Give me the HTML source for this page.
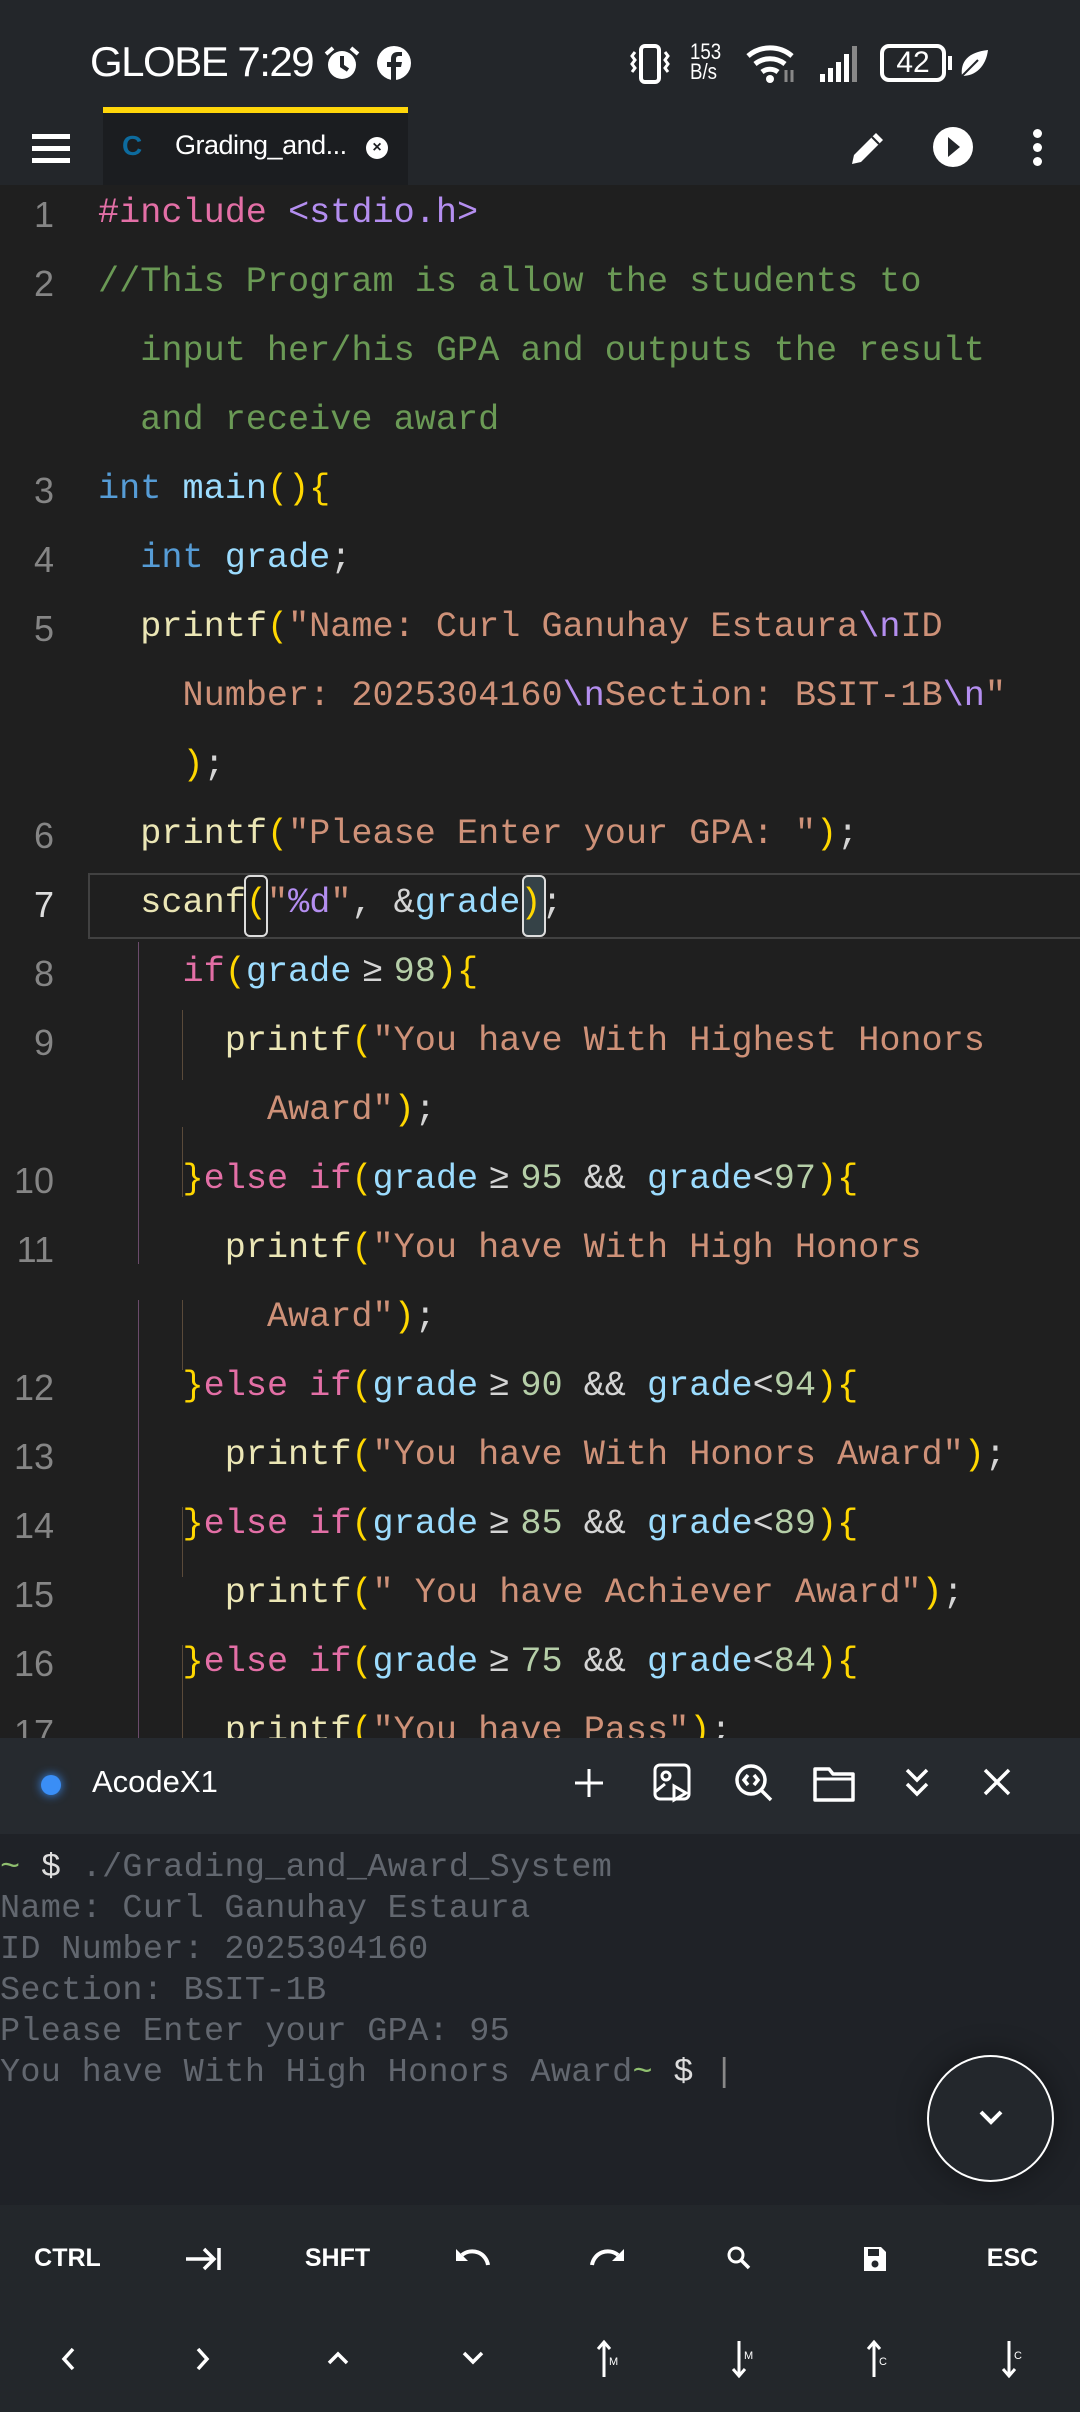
<!DOCTYPE html>
<html><head><meta charset="utf-8"><style>
*{margin:0;padding:0;box-sizing:border-box}
body{width:1080px;height:2412px;background:#1f1f1f;position:relative;overflow:hidden;font-family:"Liberation Sans",sans-serif}
.abs{position:absolute}
#status{left:0;top:0;width:1080px;height:110px;background:#23262a}
#tool{left:0;top:110px;width:1080px;height:75px;background:#23262a}
#editor{left:0;top:185px;width:1080px;height:1553px;background:#1f1f1f;overflow:hidden}
.row{position:absolute;left:98px;height:69px;line-height:71px;font-family:"Liberation Mono","DejaVu Sans Mono",monospace;font-size:35.2px;white-space:pre;color:#d4d4d4}
.ln{position:absolute;left:0;width:54px;text-align:right;height:69px;line-height:74px;font-family:"Liberation Sans",sans-serif;font-size:36px;color:#858585}
.k{color:#e36fa6}.f{color:#ebe6b5}.s{color:#ce9178}.v{color:#9cdcfe}.n{color:#b5cea8}.b{color:#ffd700}.t{color:#569cd6}.c{color:#6a9955}.p{color:#b48ef0}.e{color:#b48ef0}.w{color:#d4d4d4}
.ge{display:inline-block;width:2ch;text-align:center;color:#d4d4d4}
.g1{position:absolute;width:1px;background:#6b4b6b}
.g2{position:absolute;width:1px;background:#5a4a3a}
#term{left:0;top:1738px;width:1080px;height:467px;background:#1f2227}
#thead{left:0;top:1738px;width:1080px;height:96px;background:#262a2f}
.tl{position:absolute;left:0;font-family:"Liberation Mono",monospace;font-size:33.5px;letter-spacing:0.3px;color:#62676f;white-space:pre;height:41px;line-height:41px}
#kb{left:0;top:2205px;width:1080px;height:207px;background:#23272b}
.key{position:absolute;width:135px;text-align:center;color:#fff;font-weight:bold;font-size:25px;height:40px;line-height:40px}
</style></head><body>
<div id="status" class="abs">
 <div class="abs" style="left:90px;top:38px;font-size:42px;color:#fff;letter-spacing:-1.5px">GLOBE 7:29</div>
 <svg class="abs" style="left:322px;top:44px" width="40" height="40" viewBox="0 0 40 40"><circle cx="20" cy="21" r="14" fill="#fff"/><path d="M20 12v10l6 4" stroke="#23262a" stroke-width="4" fill="none"/><path d="M4 10l7-6M36 10l-7-6" stroke="#fff" stroke-width="4"/></svg>
 <svg class="abs" style="left:376px;top:45px" width="36" height="36" viewBox="0 0 36 36"><circle cx="18" cy="18" r="17" fill="#fff"/><path d="M20 36V22h5l1-5h-6v-3c0-2 1-3 3-3h3V7h-4c-5 0-7 3-7 7v3h-4v5h4v14z" fill="#23262a"/></svg>
 <svg class="abs" style="left:628px;top:44px" width="44" height="40" viewBox="0 0 44 40"><rect x="13" y="2" width="18" height="36" rx="4" fill="none" stroke="#fff" stroke-width="4"/><path d="M7 8l-3 4 3 4-3 4 3 4-3 4M37 8l3 4-3 4 3 4-3 4 3 4" stroke="#fff" stroke-width="3" fill="none"/></svg>
 <div class="abs" style="left:690px;top:42px;color:#fff;font-size:22px;line-height:20px;transform:scaleX(.85);transform-origin:left">153<br>B/s</div>
 <svg class="abs" style="left:746px;top:42px" width="52" height="42" viewBox="0 0 52 42"><path d="M2 14a34 34 0 0 1 44 0M9 22a24 24 0 0 1 30 0M16 30a13 13 0 0 1 16 0" stroke="#fff" stroke-width="5" fill="none"/><circle cx="24" cy="37" r="4" fill="#fff"/><path d="M40 28v12M46 28v12" stroke="#888" stroke-width="3"/></svg>
 <svg class="abs" style="left:818px;top:44px" width="44" height="40" viewBox="0 0 44 40"><rect x="2" y="30" width="5" height="8" fill="#fff"/><rect x="10" y="24" width="5" height="14" fill="#fff"/><rect x="18" y="18" width="5" height="20" fill="#fff"/><rect x="26" y="10" width="5" height="28" fill="#fff"/><rect x="34" y="2" width="5" height="36" fill="#888"/></svg>
 <div class="abs" style="left:880px;top:44px;width:66px;height:38px;border:4px solid #fff;border-radius:9px;color:#fff;font-size:30px;line-height:30px;text-align:center">42</div>
 <div class="abs" style="left:948px;top:56px;width:4px;height:14px;background:#fff"></div>
 <svg class="abs" style="left:958px;top:48px" width="32" height="32" viewBox="0 0 32 32"><path d="M30 2C10 4 2 14 4 28 18 28 28 18 30 2z" fill="#fff"/><path d="M4 28L20 12" stroke="#23262a" stroke-width="2"/></svg>
</div>
<div id="tool" class="abs">
 <div class="abs" style="left:103px;top:-3px;width:305px;height:6px;background:#ffd60a"></div>
 <div class="abs" style="left:103px;top:3px;width:305px;height:72px;background:#1b1d20"></div>
 <div class="abs" style="left:32px;top:24px;width:38px;height:5px;background:#fff;box-shadow:0 12px 0 #fff,0 24px 0 #fff"></div>
 <div class="abs" style="left:122px;top:20px;color:#0d6b9e;font-weight:bold;font-size:28px">C</div>
 <div class="abs" style="left:175px;top:20px;color:#fff;font-size:27px;letter-spacing:-.5px">Grading_and...</div>
 <div class="abs" style="left:366px;top:27px;width:22px;height:22px;border-radius:50%;background:#fff;color:#1b1d20;font-size:16px;line-height:22px;text-align:center;font-weight:bold">×</div>
 <svg class="abs" style="left:848px;top:18px" width="40" height="40" viewBox="0 0 40 40"><path d="M4 36l2-9 22-22 7 7-22 22z" fill="#fff"/><path d="M24 9l7 7" stroke="#23262a" stroke-width="2"/></svg>
 <svg class="abs" style="left:932px;top:16px" width="42" height="42" viewBox="0 0 42 42"><circle cx="21" cy="21" r="20" fill="#fff"/><path d="M16 11l12 10-12 10z" fill="#23262a"/></svg>
 <div class="abs" style="left:1033px;top:19px;width:9px;height:9px;border-radius:50%;background:#fff;box-shadow:0 14px 0 #fff,0 28px 0 #fff"></div>
</div>
<div id="editor" class="abs">
 <div class="abs" style="left:88px;top:688px;width:1000px;height:66px;border:2px solid #414141"></div>
 <div class="abs" style="left:244px;top:690px;width:24px;height:62px;border:2px solid #ddd;border-radius:6px"></div>
 <div class="abs" style="left:522px;top:690px;width:24px;height:62px;border:2px solid #ddd;border-radius:6px;background:rgba(120,170,190,.25)"></div>
 <div class="g1" style="left:138px;top:757px;height:322px"></div>
 <div class="g2" style="left:182px;top:825px;height:70px"></div>
 <div class="g1" style="left:138px;top:1115px;height:460px"></div>
 <div class="g2" style="left:182px;top:1115px;height:70px"></div>
 <div class="g2" style="left:182px;top:1322px;height:70px"></div>
 <div class="g2" style="left:182px;top:1460px;height:70px"></div>
 <div class="g2" style="left:182px;top:1530px;height:70px"></div>
 <div class="g1" style="left:138px;top:942px;height:70px"></div>
 <div class="g2" style="left:182px;top:942px;height:70px"></div>

 <div class="ln" style="top:-7px">1</div><div class="row" style="top:-7px"><span class="k">#include</span> <span class="p">&lt;stdio.h&gt;</span></div>
 <div class="ln" style="top:62px">2</div><div class="row c" style="top:62px">//This Program is allow the students to</div>
 <div class="row c" style="top:131px">  input her/his GPA and outputs the result</div>
 <div class="row c" style="top:200px">  and receive award</div>
 <div class="ln" style="top:269px">3</div><div class="row" style="top:269px"><span class="t">int</span> <span class="v">main</span><span class="b">(){</span></div>
 <div class="ln" style="top:338px">4</div><div class="row" style="top:338px">  <span class="t">int</span> <span class="v">grade</span>;</div>
 <div class="ln" style="top:407px">5</div><div class="row" style="top:407px">  <span class="f">printf</span><span class="b">(</span><span class="s">"Name: Curl Ganuhay Estaura</span><span class="e">\n</span><span class="s">ID</span></div>
 <div class="row" style="top:476px">    <span class="s">Number: 2025304160</span><span class="e">\n</span><span class="s">Section: BSIT-1B</span><span class="e">\n</span><span class="s">"</span></div>
 <div class="row" style="top:545px">    <span class="b">)</span>;</div>
 <div class="ln" style="top:614px">6</div><div class="row" style="top:614px">  <span class="f">printf</span><span class="b">(</span><span class="s">"Please Enter your GPA: "</span><span class="b">)</span>;</div>
 <div class="ln" style="top:683px;color:#ddd">7</div><div class="row" style="top:683px">  <span class="f">scanf</span><span class="b">(</span><span class="s">"</span><span class="p">%d</span><span class="s">"</span>, &amp;<span class="v">grade</span><span class="b">)</span>;</div>
 <div class="ln" style="top:752px">8</div><div class="row" style="top:752px">    <span class="k">if</span><span class="b">(</span><span class="v">grade</span><span class="ge">≥</span><span class="n">98</span><span class="b">){</span></div>
 <div class="ln" style="top:821px">9</div><div class="row" style="top:821px">      <span class="f">printf</span><span class="b">(</span><span class="s">"You have With Highest Honors</span></div>
 <div class="row" style="top:890px">        <span class="s">Award"</span><span class="b">)</span>;</div>
 <div class="ln" style="top:959px">10</div><div class="row" style="top:959px">    <span class="b">}</span><span class="k">else if</span><span class="b">(</span><span class="v">grade</span><span class="ge">≥</span><span class="n">95</span> &amp;&amp; <span class="v">grade</span>&lt;<span class="n">97</span><span class="b">){</span></div>
 <div class="ln" style="top:1028px">11</div><div class="row" style="top:1028px">      <span class="f">printf</span><span class="b">(</span><span class="s">"You have With High Honors</span></div>
 <div class="row" style="top:1097px">        <span class="s">Award"</span><span class="b">)</span>;</div>
 <div class="ln" style="top:1166px">12</div><div class="row" style="top:1166px">    <span class="b">}</span><span class="k">else if</span><span class="b">(</span><span class="v">grade</span><span class="ge">≥</span><span class="n">90</span> &amp;&amp; <span class="v">grade</span>&lt;<span class="n">94</span><span class="b">){</span></div>
 <div class="ln" style="top:1235px">13</div><div class="row" style="top:1235px">      <span class="f">printf</span><span class="b">(</span><span class="s">"You have With Honors Award"</span><span class="b">)</span>;</div>
 <div class="ln" style="top:1304px">14</div><div class="row" style="top:1304px">    <span class="b">}</span><span class="k">else if</span><span class="b">(</span><span class="v">grade</span><span class="ge">≥</span><span class="n">85</span> &amp;&amp; <span class="v">grade</span>&lt;<span class="n">89</span><span class="b">){</span></div>
 <div class="ln" style="top:1373px">15</div><div class="row" style="top:1373px">      <span class="f">printf</span><span class="b">(</span><span class="s">" You have Achiever Award"</span><span class="b">)</span>;</div>
 <div class="ln" style="top:1442px">16</div><div class="row" style="top:1442px">    <span class="b">}</span><span class="k">else if</span><span class="b">(</span><span class="v">grade</span><span class="ge">≥</span><span class="n">75</span> &amp;&amp; <span class="v">grade</span>&lt;<span class="n">84</span><span class="b">){</span></div>
 <div class="ln" style="top:1511px">17</div><div class="row" style="top:1511px">      <span class="f">printf</span><span class="b">(</span><span class="s">"You have Pass"</span><span class="b">)</span>;</div>
</div>
<div id="term" class="abs">
 <div class="tl" style="top:110px"><span style="color:#8fbf6f">~</span> <span style="color:#ddd">$</span> ./Grading_and_Award_System</div>
 <div class="tl" style="top:151px">Name: Curl Ganuhay Estaura</div>
 <div class="tl" style="top:192px">ID Number: 2025304160</div>
 <div class="tl" style="top:233px">Section: BSIT-1B</div>
 <div class="tl" style="top:274px">Please Enter your GPA: 95</div>
 <div class="tl" style="top:315px">You have With High Honors Award<span style="color:#8fbf6f">~</span> <span style="color:#ddd">$</span> <span style="color:#888">|</span></div>
 <div class="abs" style="left:927px;top:317px;width:127px;height:127px;border-radius:50%;border:2px solid #fff;background:#23272c;box-shadow:0 0 30px rgba(0,0,0,.4)"></div>
 <svg class="abs" style="left:978px;top:370px" width="26" height="20" viewBox="0 0 26 20"><path d="M3 4l10 10 10-10" stroke="#fff" stroke-width="4" fill="none"/></svg>
</div>
<div id="thead" class="abs">
 <div class="abs" style="left:41px;top:37px;width:20px;height:20px;border-radius:50%;background:#3a8ef6;box-shadow:0 0 10px #3a8ef6"></div>
 <div class="abs" style="left:92px;top:26px;color:#fff;font-size:31px">AcodeX1</div>
 <svg class="abs" style="left:572px;top:28px" width="34" height="34" viewBox="0 0 34 34"><path d="M17 3v28M3 17h28" stroke="#fff" stroke-width="3"/></svg>
 <svg class="abs" style="left:652px;top:24px" width="42" height="42" viewBox="0 0 42 42"><rect x="3" y="3" width="34" height="34" rx="5" fill="none" stroke="#fff" stroke-width="3"/><circle cx="14" cy="14" r="4" fill="none" stroke="#fff" stroke-width="3"/><path d="M3 30l10-8M22 24v14l12-7z" stroke="#fff" stroke-width="3" fill="#262a2f"/></svg>
 <svg class="abs" style="left:733px;top:24px" width="42" height="42" viewBox="0 0 42 42"><circle cx="18" cy="18" r="14" fill="none" stroke="#fff" stroke-width="3.5"/><path d="M28 28l10 10M15 13l-4 5 4 5M21 13l4 5-4 5" stroke="#fff" stroke-width="3.5" fill="none"/></svg>
 <svg class="abs" style="left:812px;top:26px" width="46" height="40" viewBox="0 0 46 40"><path d="M3 5h14l4 5h20v26H3z" fill="none" stroke="#fff" stroke-width="3.5" stroke-linejoin="round"/><path d="M3 15h38" stroke="#fff" stroke-width="3"/></svg>
 <svg class="abs" style="left:902px;top:28px" width="30" height="34" viewBox="0 0 30 34"><path d="M5 4l10 10 10-10M5 18l10 10 10-10" stroke="#fff" stroke-width="3.5" fill="none"/></svg>
 <svg class="abs" style="left:982px;top:29px" width="30" height="30" viewBox="0 0 30 30"><path d="M3 3l24 24M27 3L3 27" stroke="#fff" stroke-width="3.5"/></svg>
</div>
<div id="kb" class="abs">
 <div class="key" style="left:0;top:33px">CTRL</div>
 <svg class="abs" style="left:184px;top:40px" width="38" height="28" viewBox="0 0 38 28"><path d="M2 14h28M20 4l10 10-10 10M35 3v22" stroke="#fff" stroke-width="3.5" fill="none"/></svg>
 <div class="key" style="left:270px;top:33px">SHFT</div>
 <svg class="abs" style="left:454px;top:40px" width="36" height="26" viewBox="0 0 36 26"><path d="M8 10a16 16 0 0 1 26 10" stroke="#fff" stroke-width="4" fill="none"/><path d="M2 4v12h12z" fill="#fff"/></svg>
 <svg class="abs" style="left:590px;top:40px" width="36" height="26" viewBox="0 0 36 26"><path d="M28 10a16 16 0 0 0-26 10" stroke="#fff" stroke-width="4" fill="none"/><path d="M34 4v12H22z" fill="#fff"/></svg>
 <svg class="abs" style="left:726px;top:40px" width="26" height="26" viewBox="0 0 26 26"><circle cx="10" cy="10" r="7" fill="none" stroke="#fff" stroke-width="3"/><path d="M15 15l8 8" stroke="#fff" stroke-width="3.5"/></svg>
 <svg class="abs" style="left:862px;top:40px" width="26" height="28" viewBox="0 0 26 28"><path d="M2 2h17l5 5v19H2z" fill="#fff"/><rect x="6" y="4" width="11" height="7" fill="#23272b"/><circle cx="13" cy="19" r="3.5" fill="#23272b"/></svg>
 <div class="key" style="left:945px;top:33px">ESC</div>
 <svg class="abs" style="left:60px;top:141px" width="16" height="26" viewBox="0 0 16 26"><path d="M13 3L4 13l9 10" stroke="#fff" stroke-width="3.5" fill="none"/></svg>
 <svg class="abs" style="left:195px;top:141px" width="16" height="26" viewBox="0 0 16 26"><path d="M3 3l9 10-9 10" stroke="#fff" stroke-width="3.5" fill="none"/></svg>
 <svg class="abs" style="left:326px;top:145px" width="24" height="16" viewBox="0 0 24 16"><path d="M3 13l9-9 9 9" stroke="#fff" stroke-width="3.5" fill="none"/></svg>
 <svg class="abs" style="left:461px;top:145px" width="24" height="16" viewBox="0 0 24 16"><path d="M3 3l9 9 9-9" stroke="#fff" stroke-width="3.5" fill="none"/></svg>
 <svg class="abs" style="left:596px;top:134px" width="26" height="40" viewBox="0 0 26 40"><path d="M8 38V4M2 10l6-7 6 7" stroke="#fff" stroke-width="3" fill="none"/><text x="13" y="26" fill="#fff" font-size="11" font-family="Liberation Sans">M</text></svg>
 <svg class="abs" style="left:731px;top:134px" width="26" height="40" viewBox="0 0 26 40"><path d="M8 2v34M2 30l6 7 6-7" stroke="#fff" stroke-width="3" fill="none"/><text x="13" y="20" fill="#fff" font-size="11" font-family="Liberation Sans">M</text></svg>
 <svg class="abs" style="left:866px;top:134px" width="26" height="40" viewBox="0 0 26 40"><path d="M8 38V4M2 10l6-7 6 7" stroke="#fff" stroke-width="3" fill="none"/><text x="13" y="26" fill="#fff" font-size="11" font-family="Liberation Sans">C</text></svg>
 <svg class="abs" style="left:1001px;top:134px" width="26" height="40" viewBox="0 0 26 40"><path d="M8 2v34M2 30l6 7 6-7" stroke="#fff" stroke-width="3" fill="none"/><text x="13" y="20" fill="#fff" font-size="11" font-family="Liberation Sans">C</text></svg>
</div>
</body></html>
